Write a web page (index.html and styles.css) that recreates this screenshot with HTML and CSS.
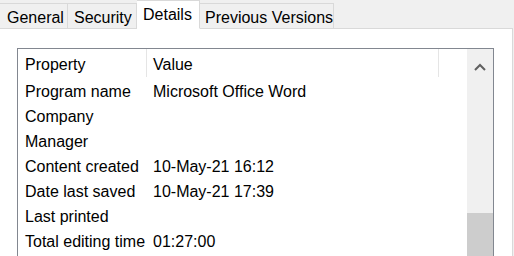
FILE: index.html
```html
<!DOCTYPE html>
<html>
<head>
<meta charset="utf-8">
<link rel="stylesheet" href="styles.css">
</head>
<body>
<div class="dialog">
  <div class="tabstrip">
    <div class="tab tab-general">General</div>
    <div class="tab tab-security">Security</div>
    <div class="tab tab-details active">Details</div>
    <div class="tab tab-prev">Previous Versions</div>
  </div>
  <div class="page">
    <div class="listbox">
      <div class="list">
        <div class="row header">
          <div class="cell c1">Property</div>
          <div class="cell c2">Value</div>
          <div class="cell c3"></div>
        </div>
        <div class="row"><div class="cell c1">Program name</div><div class="cell c2">Microsoft Office Word</div></div>
        <div class="row"><div class="cell c1">Company</div><div class="cell c2"></div></div>
        <div class="row"><div class="cell c1">Manager</div><div class="cell c2"></div></div>
        <div class="row"><div class="cell c1">Content created</div><div class="cell c2">10-May-21 16:12</div></div>
        <div class="row"><div class="cell c1">Date last saved</div><div class="cell c2">10-May-21 17:39</div></div>
        <div class="row"><div class="cell c1">Last printed</div><div class="cell c2"></div></div>
        <div class="row"><div class="cell c1">Total editing time</div><div class="cell c2">01:27:00</div></div>
      </div>
      <div class="scrollbar">
        <div class="arrow">
          <svg width="12" height="8" viewBox="0 0 12 8"><path d="M1 7 L6 2 L11 7" fill="none" stroke="#606060" stroke-width="2"/></svg>
        </div>
        <div class="track"></div>
        <div class="thumb"></div>
      </div>
    </div>
  </div>
</div>
</body>
</html>
```
FILE: styles.css
```css
html, body {
  margin: 0;
  padding: 0;
  background: #f0f0f0;
  overflow: hidden;
}
body {
  width: 514px;
  height: 256px;
  font-family: "Liberation Sans", Arial, sans-serif;
  font-size: 16px;
  color: #000;
}
.dialog {
  display: flex;
  flex-direction: column;
  height: 256px;
}
.tabstrip {
  display: flex;
  align-items: flex-end;
  height: 30px;
  box-sizing: border-box;
  border-bottom: 1px solid #d9d9d9;
  width: 513px;
}
.tab {
  box-sizing: border-box;
  height: 26px;
  margin-bottom: -1px;
  border: 1px solid #d9d9d9;
  border-left: none;
  background: #f0f0f0;
  line-height: 24px;
  padding-top: 2px;
  white-space: nowrap;
}
.tab-general { width: 68px; padding-left: 7px; }
.tab-security { width: 69px; padding-left: 6px; }
.tab-details {
  width: 63px;
  padding-left: 6px;
  height: 29px;
  background: #fff;
  border-bottom-color: #fff;
  line-height: 26px;
  padding-top: 1px;
}
.tab-prev { width: 134px; padding-left: 5px; }
.page {
  flex: 1;
  width: 513px;
  box-sizing: border-box;
  background: #fff;
  border-right: 1px solid #d9d9d9;
  padding: 19px 0 0 17px;
}
.listbox {
  display: flex;
  width: 477px;
  height: 220px;
  box-sizing: border-box;
  border: 1px solid #828790;
  border-bottom: none;
  background: #fff;
}
.list {
  flex: 1;
  display: flex;
  flex-direction: column;
}
.row {
  display: flex;
  height: 25px;
  align-items: center;
  box-sizing: border-box;
  padding-top: 2px;
}
.row.header {
  height: 29px;
  padding-top: 0;
  align-items: stretch;
}
.row.header .cell {
  display: flex;
  align-items: center;
  padding-top: 3px;
}
.cell {
  box-sizing: border-box;
  white-space: nowrap;
}
.c1 {
  width: 129px;
  padding-left: 7px;
}
.c2 {
  width: 292px;
  padding-left: 6px;
}
.header .c1, .header .c2 {
  border-right: 1px solid #e5e5e5;
  margin-bottom: 1px;
}
.scrollbar {
  width: 26px;
  background: #f0f0f0;
  display: flex;
  flex-direction: column;
}
.arrow {
  height: 35px;
  display: flex;
  justify-content: center;
  padding-top: 14px;
  box-sizing: border-box;
}
.track {
  height: 129px;
}
.thumb {
  flex: 1;
  background: #cdcdcd;
}
```
